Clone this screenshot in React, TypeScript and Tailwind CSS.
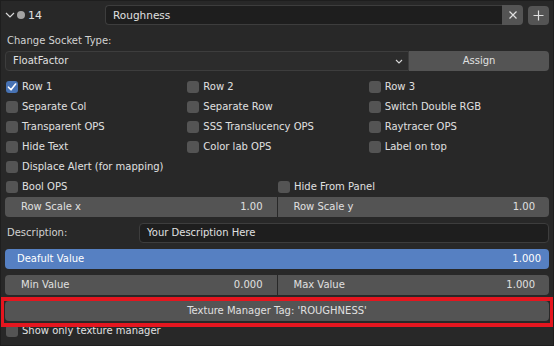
import React from 'react';

const Check = ({ label, checked = false }: { label: string; checked?: boolean }) => (
  <div className="flex items-center h-[20px] pl-[1px]">
    <div
      className={`w-[12px] h-[12px] rounded-[3px] flex items-center justify-center shrink-0 ${
        checked ? 'bg-[#4772b3]' : 'bg-[#545454]'
      }`}
    >
      {checked && (
        <svg width="10" height="10" viewBox="0 0 10 10" fill="none">
          <path d="M1.5 5.2 L4 7.8 L8.6 2" stroke="#ffffff" strokeWidth="1.6" strokeLinecap="round" strokeLinejoin="round" />
        </svg>
      )}
    </div>
    <span className="ml-[4px] whitespace-nowrap">{label}</span>
  </div>
);

const Slider = ({ label, value, side }: { label: string; value: string; side: 'l' | 'r' }) => (
  <div
    className={`flex-1 flex items-center justify-between h-[20px] bg-[#545454] pl-[16px] pr-[14px] ${
      side === 'l' ? 'rounded-l-[4px]' : 'rounded-r-[4px]'
    }`}
  >
    <span>{label}</span>
    <span>{value}</span>
  </div>
);

function App() {
  return (
    <div className="relative w-[554px] h-[346px] overflow-hidden bg-[#282828] border border-[#1e1e1e] px-[4px] text-[10px] leading-none text-[#e0e0e0] font-['DejaVu_Sans',sans-serif]">
      {/* header */}
      <div className="flex items-center h-[20px] mt-[4px]">
        <div className="w-[100px] flex items-center">
          <svg width="10" height="6" viewBox="0 0 10 6" fill="none">
            <path d="M1 1 L5 5 L9 1" stroke="#d8d8d8" strokeWidth="1.2" />
          </svg>
          <div className="w-[8px] h-[8px] rounded-full bg-[#a3a3a3] ml-[2px]" />
          <span className="ml-[3px] text-[11px]">14</span>
        </div>
        <div className="flex-1 flex h-[20px]">
          <div className="flex-1 flex items-center bg-[#1e1e1e] border border-[#3d3d3d] border-r-0 rounded-l-[4px] pl-[7px] text-[10.5px]">
            Roughness
          </div>
          <div className="w-[21px] bg-[#545454] rounded-r-[4px] flex items-center justify-center">
            <svg width="10" height="10" viewBox="0 0 10 10">
              <path d="M1.5 1.5 L8.5 8.5 M8.5 1.5 L1.5 8.5" stroke="#e0e0e0" strokeWidth="1.2" />
            </svg>
          </div>
        </div>
        <div className="w-[21px] h-[19px] ml-[5px] bg-[#545454] rounded-[4px] flex items-center justify-center">
          <svg width="11" height="11" viewBox="0 0 11 11">
            <path d="M5.5 0.5 V10.5 M0.5 5.5 H10.5" stroke="#e0e0e0" strokeWidth="1.2" />
          </svg>
        </div>
      </div>

      {/* socket type */}
      <div className="h-[20px] mt-[6px] flex items-center pl-[2px] text-[#d2d2d2]">Change Socket Type:</div>
      <div className="flex h-[20px]">
        <div className="w-[404px] flex items-center justify-between bg-[#2c2c2c] border border-[#3d3d3d] rounded-l-[4px] pl-[7px] pr-[5px]">
          <span>FloatFactor</span>
          <svg width="8" height="5" viewBox="0 0 8 5" fill="none">
            <path d="M1 1 L4 4 L7 1" stroke="#d8d8d8" strokeWidth="1.1" />
          </svg>
        </div>
        <div className="flex-1 flex items-center justify-center bg-[#545454] rounded-r-[4px]">Assign</div>
      </div>

      {/* options */}
      <div className="grid grid-cols-3 mt-[6px]">
        <Check label="Row 1" checked />
        <Check label="Row 2" />
        <Check label="Row 3" />
        <Check label="Separate Col" />
        <Check label="Separate Row" />
        <Check label="Switch Double RGB" />
        <Check label="Transparent OPS" />
        <Check label="SSS Translucency OPS" />
        <Check label="Raytracer OPS" />
        <Check label="Hide Text" />
        <Check label="Color lab OPS" />
        <Check label="Label on top" />
        <Check label="Displace Alert (for mapping)" />
      </div>
      <div className="grid grid-cols-2">
        <Check label="Bool OPS" />
        <Check label="Hide From Panel" />
      </div>

      <div className="flex gap-[1px]">
        <Slider label="Row Scale x" value="1.00" side="l" />
        <Slider label="Row Scale y" value="1.00" side="r" />
      </div>

      <div className="flex items-center h-[20px] mt-[6px]">
        <span className="w-[134px] pl-[2px] text-[#d2d2d2]">Description:</span>
        <div className="flex-1 h-[20px] flex items-center bg-[#1e1e1e] border border-[#3d3d3d] rounded-[4px] pl-[7px]">
          Your Description Here
        </div>
      </div>

      <div className="flex items-center justify-between h-[20px] mt-[6px] bg-[#5680c2] rounded-[4px] pl-[12px] pr-[8px] text-white">
        <span>Deafult Value</span>
        <span>1.000</span>
      </div>

      <div className="flex gap-[1px] mt-[6px]">
        <Slider label="Min Value" value="0.000" side="l" />
        <Slider label="Max Value" value="1.000" side="r" />
      </div>

      <div className="h-[20px] mt-[6px] flex items-center justify-center bg-[#545454] rounded-[4px]">
        Texture Manager Tag: 'ROUGHNESS'
      </div>
      <Check label="Show only texture manager" />

      {/* highlight annotation */}
      <div className="absolute left-[-1px] top-[296px] w-[554px] h-[30px] border-[4px] border-[#e5161f] pointer-events-none" />
    </div>
  );
}

export default App;
